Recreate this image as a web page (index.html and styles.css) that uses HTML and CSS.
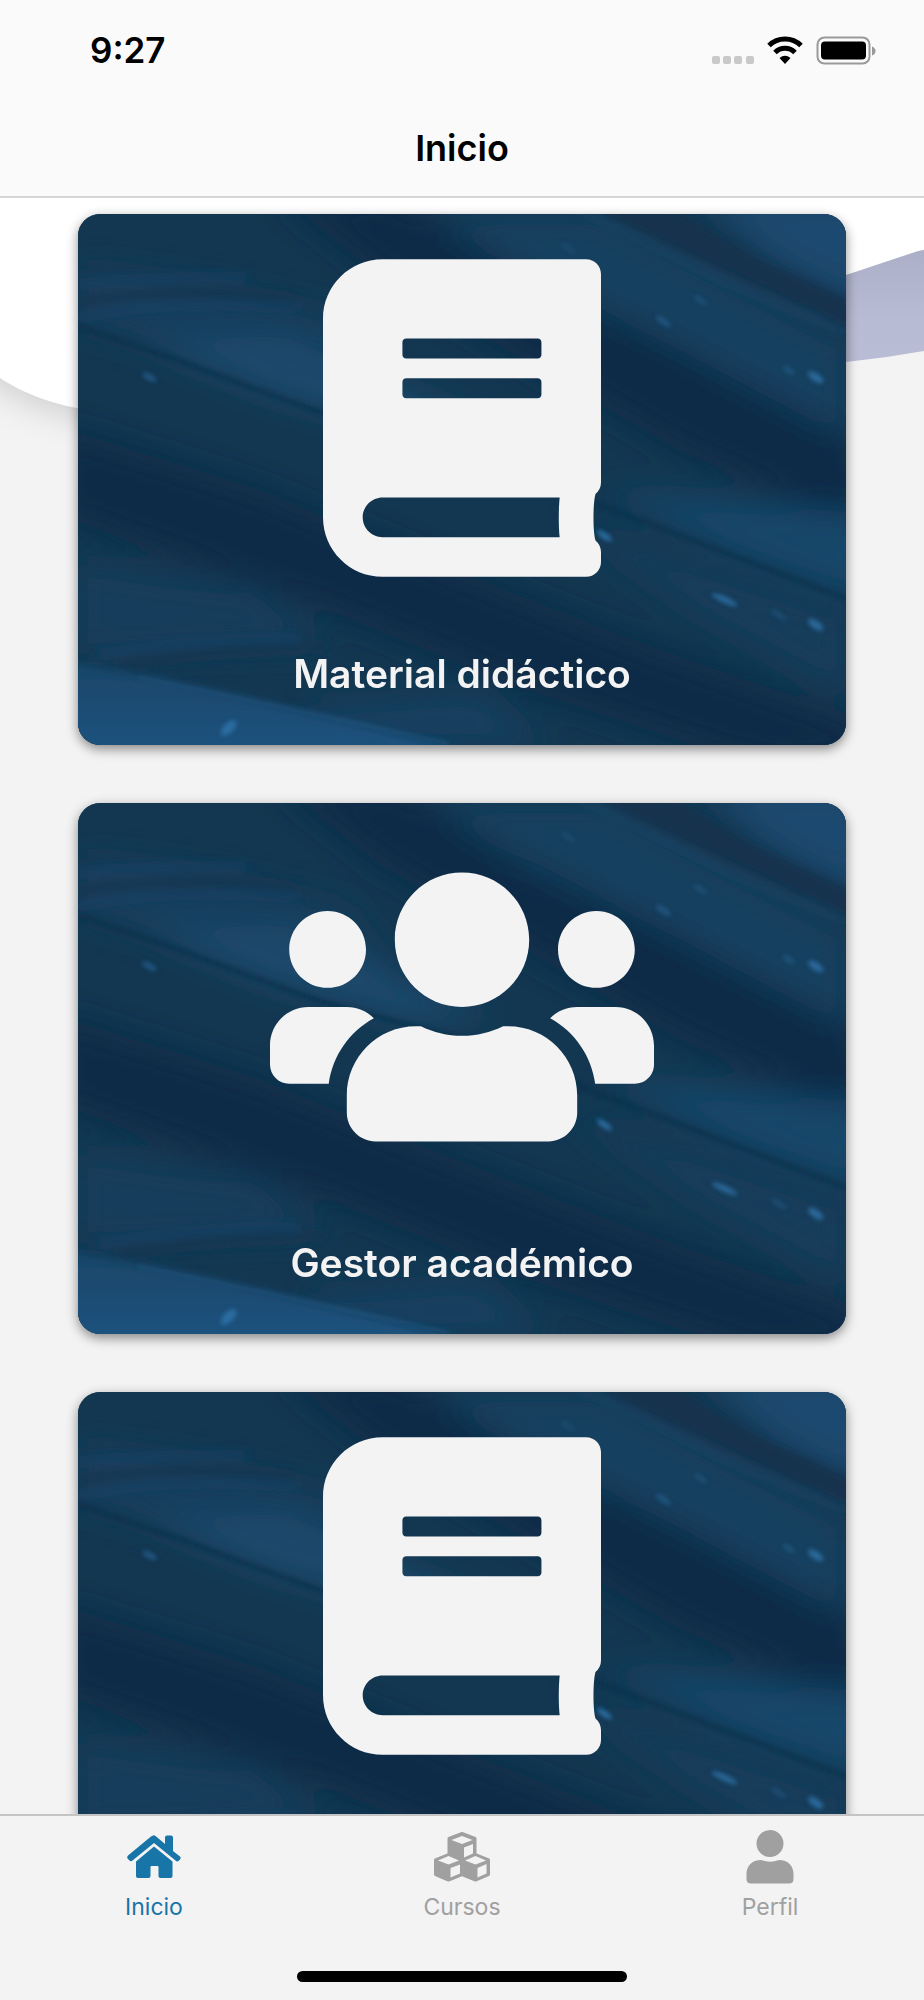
FILE: index.html
```html
<!DOCTYPE html>
<html lang="es">
<head>
<meta charset="utf-8">
<meta name="viewport" content="width=device-width, initial-scale=1">
<title>Inicio</title>
<link rel="stylesheet" href="styles.css">
</head>
<body>
<svg class="defs" aria-hidden="true">
  <defs>
    <filter id="soft" x="-20%" y="-20%" width="140%" height="140%"><feGaussianBlur stdDeviation="16"/></filter>
    <filter id="soft-sm" x="-20%" y="-20%" width="140%" height="140%"><feGaussianBlur stdDeviation="5"/></filter>
    <filter id="soft-xs" x="-50%" y="-50%" width="200%" height="200%"><feGaussianBlur stdDeviation="2"/></filter>
    <linearGradient id="corner" x1="0" y1="0" x2="0" y2="1"><stop offset="0" stop-color="#184467"/><stop offset="1" stop-color="#1f5582"/></linearGradient>
  </defs>
  <symbol id="texture" viewBox="0 0 768 530" preserveAspectRatio="xMidYMid slice">
    <rect width="768" height="530" fill="#133751"/>
    <g filter="url(#soft)">
      <path fill="#173d5c" d="M0 55C90 60 180 80 270 105L330 190L180 165L0 110Z"/>
      <path fill="#1a486c" d="M60 125L210 122L300 165L420 215L330 220L190 180Z"/>
      <path fill="#173f5f" d="M330 0H520L768 130V225L600 135L450 60Z"/>
      <path fill="#1b4a6f" d="M620-20H790V95L700 50Z"/>
      <path fill="#0f2c47" d="M200-20H320L450 65L570 120L790 235V320L600 235L420 130L300 60Z"/>
      <path fill="#0f2c47" d="M-20 212L180 275L350 345L540 420L790 510V550H680L450 475L250 395L-20 300Z"/>
      <path fill="#19466a" d="M520 275L620 285L790 300V385L660 340Z"/>
      <path fill="#173d5c" d="M480 305L768 400V480L620 400Z"/>
      <path fill="#173d5c" d="M0 350L180 375L250 430L0 440Z"/>
      <path fill="#174061" d="M230 490L400 480L470 530H250Z"/>
    </g>
    <g filter="url(#soft-sm)">
      <path fill="url(#corner)" d="M-20 444L90 465L200 490L385 535L-20 550Z"/>
      <path fill="#12334e" d="M505-10H585L680 45L790 95V122L660 62Z"/>
      <path fill="none" stroke="#1a4668" stroke-width="4" d="M500-5L640 65L768 118"/>
      <path fill="none" stroke="#13354f" stroke-width="7" d="M0 88Q90 72 220 84M40 452Q130 435 250 432"/>
      <path fill="none" stroke="#194163" stroke-width="6" d="M0 104Q90 84 220 94M0 70Q80 62 170 64M20 440Q120 424 220 424"/>
    </g>
    <g filter="url(#soft-xs)">
      <path fill="none" stroke="#113049" stroke-width="3" d="M0 112L100 146L240 197L400 240L510 286L768 384"/>
      <path fill="none" stroke="#256392" stroke-width="2" opacity=".6" d="M60 462L190 489L370 528"/>
      <g fill="#2b6da1">
        <ellipse cx="72" cy="163" rx="8" ry="3" transform="rotate(28 72 163)" opacity=".6"/>
        <ellipse cx="151" cy="513" rx="10" ry="5" transform="rotate(-45 151 513)"/>
        <ellipse cx="737" cy="163" rx="9" ry="4" transform="rotate(35 737 163)" opacity=".9"/>
        <ellipse cx="710" cy="156" rx="7" ry="3" transform="rotate(35 710 156)" opacity=".4"/>
        <ellipse cx="526" cy="321" rx="9" ry="3" transform="rotate(35 526 321)"/>
        <ellipse cx="646" cy="385" rx="14" ry="3" transform="rotate(25 646 385)" opacity=".9"/>
        <ellipse cx="737" cy="410" rx="9" ry="4" transform="rotate(35 737 410)" opacity=".9"/>
        <ellipse cx="585" cy="107" rx="9" ry="3" transform="rotate(35 585 107)" opacity=".5"/>
        <ellipse cx="622" cy="86" rx="8" ry="3" transform="rotate(35 622 86)" opacity=".3"/>
        <ellipse cx="490" cy="34" rx="9" ry="3" transform="rotate(35 490 34)" opacity=".2"/>
        <ellipse cx="700" cy="400" rx="9" ry="3" transform="rotate(35 700 400)" opacity=".3"/>
      </g>
    </g>
  </symbol>
  <symbol id="book" viewBox="0 0 448 512">
    <path fill="currentColor" d="M448 360V24c0-13.300-10.700-24-24-24H96C43 0 0 43 0 96v320c0 53 43 96 96 96h328c13.300 0 24-10.700 24-24v-16c0-7.500-3.500-14.300-8.900-18.700-4.200-15.400-4.200-59.300 0-74.700 5.400-4.300 8.900-11.100 8.900-18.600zM128 134c0-3.300 2.700-6 6-6h212c3.300 0 6 2.700 6 6v20c0 3.300-2.700 6-6 6H134c-3.300 0-6-2.700-6-6v-20zm0 64c0-3.300 2.700-6 6-6h212c3.300 0 6 2.700 6 6v20c0 3.300-2.700 6-6 6H134c-3.300 0-6-2.700-6-6v-20zm253.400 250H96c-17.700 0-32-14.300-32-32 0-17.600 14.400-32 32-32h285.400c-1.900 17.100-1.900 46.900 0 64z"/>
  </symbol>
  <symbol id="users" viewBox="0 0 640 512">
    <path fill="currentColor" d="M96 224c35.300 0 64-28.700 64-64s-28.700-64-64-64-64 28.700-64 64 28.700 64 64 64zm448 0c35.300 0 64-28.700 64-64s-28.700-64-64-64-64 28.700-64 64 28.700 64 64 64zm32 32h-64c-17.600 0-33.500 7.100-45.100 18.600 40.300 22.100 68.900 62 75.100 109.400h66c17.700 0 32-14.300 32-32v-32c0-35.300-28.700-64-64-64zm-256 0c61.900 0 112-50.100 112-112S381.900 32 320 32 208 82.100 208 144s50.100 112 112 112zm76.800 32h-8.300c-20.800 10-43.900 16-68.500 16s-47.600-6-68.500-16h-8.300C179.600 288 128 339.600 128 403.200V432c0 26.500 21.500 48 48 48h288c26.500 0 48-21.500 48-48v-28.800c0-63.600-51.600-115.200-115.200-115.200zm-223.700-13.400C161.500 263.100 145.600 256 128 256H64c-35.300 0-64 28.700-64 64v32c0 17.700 14.300 32 32 32h65.900c6.300-47.400 34.900-87.300 75.200-109.400z"/>
  </symbol>
</svg>

<div class="app">
  <header class="header">
    <div class="status">
      <span class="time">9:27</span>
      <svg class="status-icons" viewBox="0 0 166 32" role="img" aria-label="Wi-Fi y batería">
        <g fill="#c9c9c9"><rect x="0" y="22" width="8" height="8" rx="2"/><rect x="11" y="22" width="8" height="8" rx="2"/><rect x="22" y="22" width="8" height="8" rx="2"/><rect x="34" y="22" width="8" height="8" rx="2"/></g>
        <g fill="none" stroke="#000" stroke-width="5">
          <path d="M57 11.500A23 23 0 0 1 89 11.500"/>
          <path d="M63 18.500A14 14 0 0 1 83 18.500"/>
        </g>
        <path d="M67.500 24Q73 19.500 78.500 24L73 30Z"/>
        <rect x="105.500" y="3.500" width="52" height="26" rx="7" fill="none" stroke="#999" stroke-width="2"/>
        <rect x="109" y="7.500" width="45" height="18" rx="4"/>
        <path d="M160 12.500Q163.500 14 163.500 17T160 21.500Z" fill="#999"/>
      </svg>
    </div>
    <h1 class="title">Inicio</h1>
  </header>

  <main class="content">
    <svg class="backdrop" viewBox="0 0 924 300" aria-hidden="true">
      <defs>
        <linearGradient id="band" x1="0" y1="0" x2="0" y2="1"><stop offset="0" stop-color="#abb0c8"/><stop offset=".5" stop-color="#b7bbd4"/><stop offset="1" stop-color="#b9bdd6"/></linearGradient>
        <filter id="drop" x="-10%" y="-10%" width="120%" height="150%"><feGaussianBlur stdDeviation="20"/></filter>
      </defs>
      <path fill="#000" opacity=".2" filter="url(#drop)" d="M-60 0H700L500 180C380 215 200 218 110 216C70 213 30 202 0 181L-60 130Z"/>
      <path fill="url(#band)" d="M924 52V153Q885 160 846 164L500 190L600 100Z"/>
      <path fill="#fff" d="M0 0H924V51L846 77C600 155 300 215 110 214C70 212 30 200 0 180Z"/>
    </svg>
    <nav class="cards" aria-label="Secciones">
      <a class="card" href="#material">
        <svg class="card-bg" aria-hidden="true"><use href="#texture"/></svg>
        <svg class="card-icon" aria-hidden="true"><use href="#book"/></svg>
        <span class="card-label">Material didáctico</span>
      </a>
      <a class="card" href="#gestor">
        <svg class="card-bg" aria-hidden="true"><use href="#texture"/></svg>
        <svg class="card-icon card-icon-wide" aria-hidden="true"><use href="#users"/></svg>
        <span class="card-label">Gestor académico</span>
      </a>
      <a class="card" href="#biblioteca" aria-label="Libro">
        <svg class="card-bg" aria-hidden="true"><use href="#texture"/></svg>
        <svg class="card-icon" aria-hidden="true"><use href="#book"/></svg>
        <span class="card-label"></span>
      </a>
    </nav>
  </main>

  <footer class="footer">
    <nav class="tabs" aria-label="Principal">
      <a class="tab tab-active" href="#inicio" aria-current="page">
        <svg class="tab-icon" viewBox="0 0 60 60" aria-hidden="true">
          <g fill="currentColor">
            <path d="M29 9.500Q30 9 31.500 10L41 18V11.500Q41 9.500 43 9.500H47Q49 9.500 49 11.500V25L56 30.500Q57.500 32 56 33.500L54.500 35Q53 36 51.500 34.500L30 17L8.500 34.500Q7 36 5.500 34.500L3.500 32.500Q2.500 31 4 29.500L27 10.500Z"/>
            <path d="M30 20.500L48.500 35.500V50Q48.500 52 46.500 52H36.500Q34.500 52 34.500 50V41Q34.500 40 33.500 40H27.500Q26.500 40 26.500 41V50Q26.500 52 24.500 52H14Q12 52 12 50V35.500Z"/>
          </g>
        </svg>
        <span>Inicio</span>
      </a>
      <a class="tab" href="#cursos">
        <svg class="tab-icon" viewBox="0 0 60 60" aria-hidden="true">
          <path fill="currentColor" stroke="currentColor" stroke-width="3" stroke-linejoin="round" d="M30 7.500L43 12.500V28.500L56.500 34V48.500L43.500 54L30 48.500L16.500 54L3.500 48.500V34L17 28.500V12.500Z"/>
          <path fill="#f3f3f3" d="M30 10L19.500 14L30 18L40.500 14ZM32 21.500V31.500L41 27.500V18Z
          M16.500 30L6 34.500L16.500 38.500L27 34.500ZM18.500 42V51.500L28 47.500V38.500Z
          M43.500 30L33 34.500L43.500 38.500L54 34.500ZM45.500 42V51.500L54.500 47.500V38Z"/>
        </svg>
        <span>Cursos</span>
      </a>
      <a class="tab" href="#perfil">
        <svg class="tab-icon" viewBox="0 0 60 60" aria-hidden="true">
          <g fill="currentColor"><circle cx="30" cy="17.500" r="13.500"/>
          <path d="M21 34Q30 37.500 39 34C48 34 53.500 40 53.500 48V53Q53.500 57.500 49 57.500H11Q6.500 57.500 6.500 53V48C6.500 40 12 34 21 34Z"/></g>
        </svg>
        <span>Perfil</span>
      </a>
    </nav>
    <div class="home-bar"></div>
  </footer>
</div>
</body>
</html>
```
FILE: styles.css
```css
* {
  box-sizing: border-box;
}

body {
  margin: 0;
  background: #f3f3f3;
  color: #000;
  font-family: Inter, "Liberation Sans", sans-serif;
}

.defs {
  position: absolute;
  width: 0;
  height: 0;
}

.app {
  display: flex;
  flex-direction: column;
  height: 100vh;
}

.header {
  flex: none;
  background: #fafafa;
  border-bottom: 2px solid #d6d6d6;
}

.status {
  display: flex;
  align-items: center;
  justify-content: space-between;
  padding: 30px 46px 0 90px;
}

.time {
  font-size: 35px;
  font-weight: 600;
  line-height: 40px;
}

.status-icons {
  width: 166px;
  height: 32px;
}

.title {
  margin: 54px 0 24px;
  font-size: 36px;
  font-weight: 600;
  line-height: 48px;
  text-align: center;
}

.content {
  position: relative;
  flex: 1;
  min-height: 0;
  overflow-y: auto;
  scrollbar-width: none;
}

.backdrop {
  position: absolute;
  top: 0;
  left: 0;
  width: 100%;
}

.cards {
  position: relative;
  display: flex;
  flex-direction: column;
  gap: 58px;
  padding: 16px 78px;
}

.card {
  position: relative;
  display: flex;
  flex-direction: column;
  align-items: center;
  gap: 73px;
  padding: 45px 24px 47px;
  border-radius: 22px;
  background: #133751;
  box-shadow: 0 4px 12px rgba(0, 0, 0, 0.45);
  color: #f3f3f3;
  text-decoration: none;
  overflow: hidden;
}

.card-bg {
  position: absolute;
  inset: 0;
  width: 100%;
  height: 100%;
}

.card-icon {
  position: relative;
  width: 278px;
  height: 318px;
}

.card-icon-wide {
  width: 384px;
}

.card-label {
  position: relative;
  min-height: 48px;
  font-size: 39px;
  font-weight: 600;
  line-height: 48px;
}

.footer {
  flex: none;
  border-top: 2px solid #c4c4c4;
  background: #f3f3f3;
}

.tabs {
  display: grid;
  grid-template-columns: repeat(3, 1fr);
  padding-top: 10px;
}

.tab {
  display: flex;
  flex-direction: column;
  align-items: center;
  gap: 7px;
  color: #a0a0a0;
  font-size: 23px;
  font-weight: 400;
  line-height: 28px;
  text-decoration: none;
}

.tab-active {
  color: #1875a8;
}

.tab-icon {
  width: 60px;
  height: 60px;
}

.home-bar {
  width: 330px;
  height: 11px;
  margin: 50px auto 18px;
  border-radius: 6px;
  background: #000;
}
```
